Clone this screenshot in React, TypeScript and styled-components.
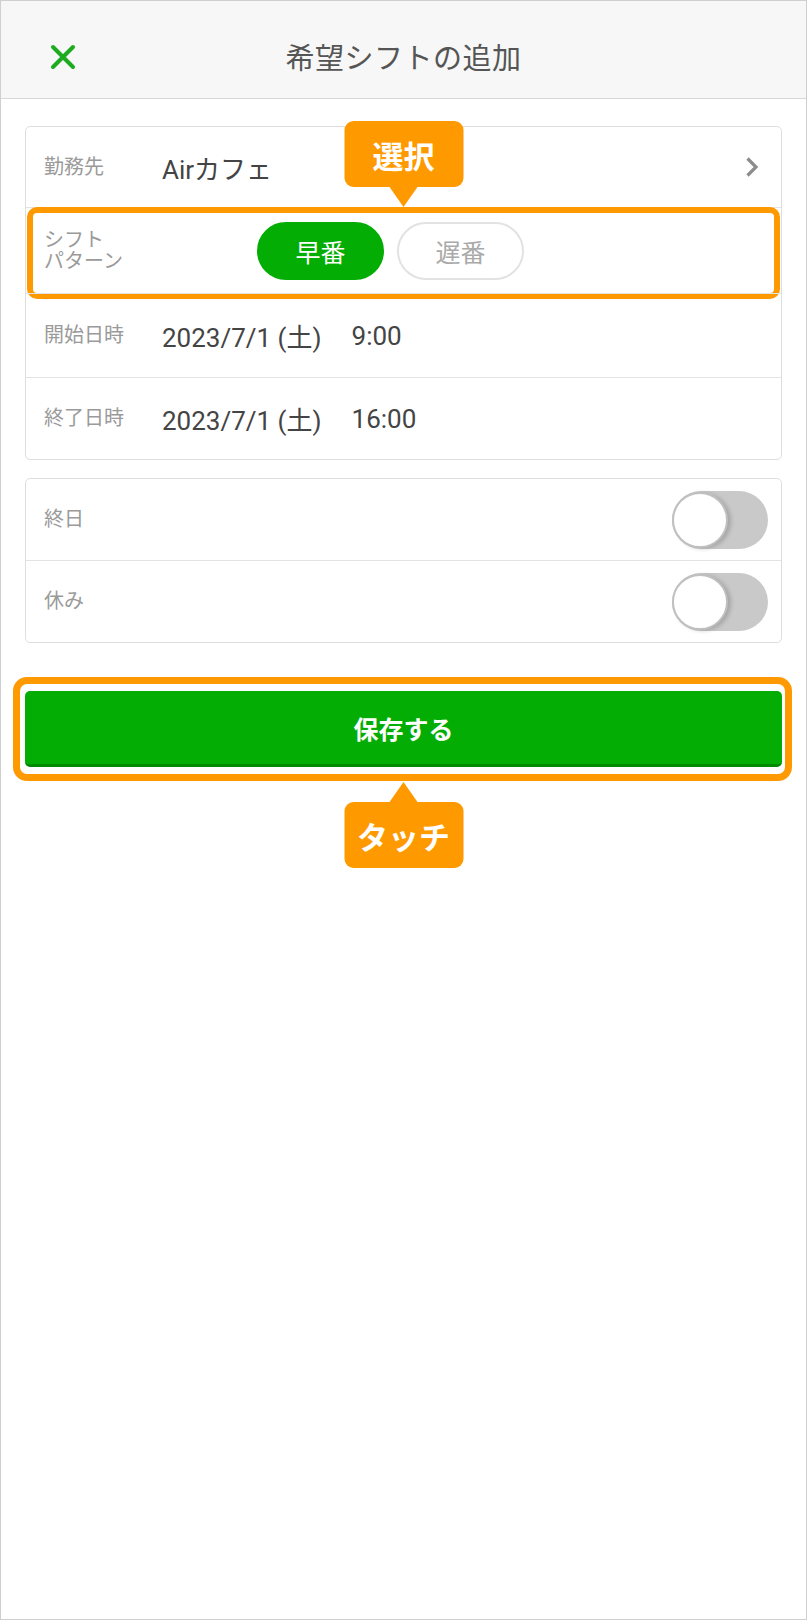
import React from "react";
import styled, { createGlobalStyle } from "styled-components";

const GREEN = "#04ad04";
const ORANGE = "#ff9900";

const GlobalStyle = createGlobalStyle`
  html, body {
    margin: 0;
    padding: 0;
    background: #fff;
  }
  body {
    font-family: Roboto, "Noto Sans CJK JP", sans-serif;
    -webkit-font-smoothing: antialiased;
  }
  * {
    box-sizing: border-box;
  }
`;

const Frame = styled.div`
  width: 807px;
  height: 1620px;
  border: 1px solid #cfcfcf;
  background: #fff;
  overflow: hidden;
`;

const Header = styled.header`
  position: relative;
  height: 98px;
  padding-top: 12px;
  display: flex;
  align-items: center;
  justify-content: center;
  background: #f7f7f7;
  border-bottom: 1px solid #d8d8d8;
`;

const CloseButton = styled.button`
  position: absolute;
  left: 47px;
  top: 41px;
  width: 30px;
  height: 30px;
  padding: 0;
  border: none;
  background: transparent;
  display: flex;
  align-items: center;
  justify-content: center;
`;

const Title = styled.h1`
  margin: 0;
  font-size: 29px;
  font-weight: 400;
  color: #555;
  letter-spacing: 0.5px;
`;

const Content = styled.main`
  padding: 27px 24px 0;
`;

const Card = styled.section<{ $gap?: number }>`
  margin-top: ${(p) => p.$gap ?? 0}px;
  border: 1px solid #dedede;
  border-radius: 5px;
  background: #fff;
`;

const Row = styled.div<{ $height: number }>`
  position: relative;
  height: ${(p) => p.$height}px;
  display: flex;
  align-items: center;
  padding: 0 13px 0 18px;

  & + & {
    border-top: 1px solid #e3e3e3;
  }
`;

const Label = styled.div`
  width: 118px;
  flex-shrink: 0;
  font-size: 20px;
  line-height: 21px;
  color: #9a9a9a;
  white-space: pre-line;
`;

const Value = styled.div`
  flex: 1;
  font-size: 26px;
  color: #444;
  display: flex;
  align-items: center;
`;

const Time = styled.span`
  margin-left: 30px;
`;

const Chevron = styled.svg`
  margin-right: 9px;
`;

const PillGroup = styled.div`
  display: flex;
  gap: 13px;
  margin-left: 95px;
`;

const Pill = styled.button<{ $active?: boolean }>`
  width: 127px;
  height: 58px;
  border-radius: 29px;
  font-family: inherit;
  font-size: 25px;
  padding: 0;
  border: 2px solid ${(p) => (p.$active ? GREEN : "#e2e2e2")};
  background: ${(p) => (p.$active ? GREEN : "#fff")};
  color: ${(p) => (p.$active ? "#fff" : "#aaa")};
`;

const Highlight = styled.div`
  position: absolute;
  top: -1px;
  bottom: -6px;
  left: 1px;
  right: 1px;
  border: 6px solid ${ORANGE};
  border-radius: 10px;
  pointer-events: none;
`;

const Callout = styled.div<{ $dir: "down" | "up" }>`
  position: absolute;
  left: 50%;
  transform: translateX(-50%);
  z-index: 2;
  width: 119px;
  height: 66px;
  border-radius: 9px;
  background: ${ORANGE};
  color: #fff;
  font-size: 31px;
  font-weight: 700;
  display: flex;
  align-items: center;
  justify-content: center;

  &::after {
    content: "";
    position: absolute;
    left: 50%;
    margin-left: -14px;
    border-left: 14px solid transparent;
    border-right: 14px solid transparent;
    ${(p) =>
      p.$dir === "down"
        ? `top: 100%; border-top: 20px solid ${ORANGE};`
        : `bottom: 100%; border-bottom: 20px solid ${ORANGE};`}
  }
`;

const SelectCallout = styled(Callout)`
  top: -87px;
`;

const TouchCallout = styled(Callout)`
  top: calc(100% + 35px);
`;

const Toggle = styled.div`
  position: relative;
  margin-left: auto;
  width: 96px;
  height: 58px;
  border-radius: 29px;
  background: #c9c9c9;
`;

const Knob = styled.div`
  position: absolute;
  left: 0;
  top: 1px;
  width: 56px;
  height: 56px;
  border-radius: 50%;
  background: #fff;
  border: 2px solid #c0c0c0;
  box-shadow: 3px 1px 4px rgba(0, 0, 0, 0.18);
`;

const SaveWrap = styled.div`
  position: relative;
  margin-top: 48px;
`;

const SaveOutline = styled.div`
  position: absolute;
  top: -14px;
  bottom: -14px;
  left: -12px;
  right: -10px;
  border: 7px solid ${ORANGE};
  border-radius: 14px;
  pointer-events: none;
`;

const SaveButton = styled.button`
  width: 100%;
  height: 76px;
  border: none;
  border-bottom: 3px solid #008a00;
  border-radius: 5px;
  background: ${GREEN};
  color: #fff;
  font-family: inherit;
  font-size: 25px;
  font-weight: 700;
  padding: 0;
`;

const App = () => {
  return (
    <>
      <GlobalStyle />
      <Frame>
        <Header>
          <CloseButton aria-label="close">
            <svg width="26" height="26" viewBox="0 0 26 26">
              <path
                d="M3 3 L23 23 M23 3 L3 23"
                stroke="#1fab1f"
                strokeWidth="4"
                strokeLinecap="round"
              />
            </svg>
          </CloseButton>
          <Title>希望シフトの追加</Title>
        </Header>

        <Content>
          <Card>
            <Row $height={80}>
              <Label>勤務先</Label>
              <Value>Airカフェ</Value>
              <Chevron width="14" height="22" viewBox="0 0 14 22">
                <path
                  d="M2.5 2.5 L11 11 L2.5 19.5"
                  fill="none"
                  stroke="#8c8c8c"
                  strokeWidth="3.2"
                />
              </Chevron>
            </Row>
            <Row $height={86}>
              <Label>{"シフト\nパターン"}</Label>
              <PillGroup>
                <Pill $active>早番</Pill>
                <Pill>遅番</Pill>
              </PillGroup>
              <Highlight />
              <SelectCallout $dir="down">選択</SelectCallout>
            </Row>
            <Row $height={84}>
              <Label>開始日時</Label>
              <Value>
                2023/7/1 (土)<Time>9:00</Time>
              </Value>
            </Row>
            <Row $height={82}>
              <Label>終了日時</Label>
              <Value>
                2023/7/1 (土)<Time>16:00</Time>
              </Value>
            </Row>
          </Card>

          <Card $gap={18}>
            <Row $height={81}>
              <Label>終日</Label>
              <Toggle>
                <Knob />
              </Toggle>
            </Row>
            <Row $height={82}>
              <Label>休み</Label>
              <Toggle>
                <Knob />
              </Toggle>
            </Row>
          </Card>

          <SaveWrap>
            <SaveButton>保存する</SaveButton>
            <SaveOutline />
            <TouchCallout $dir="up">タッチ</TouchCallout>
          </SaveWrap>
        </Content>
      </Frame>
    </>
  );
};

export default App;
